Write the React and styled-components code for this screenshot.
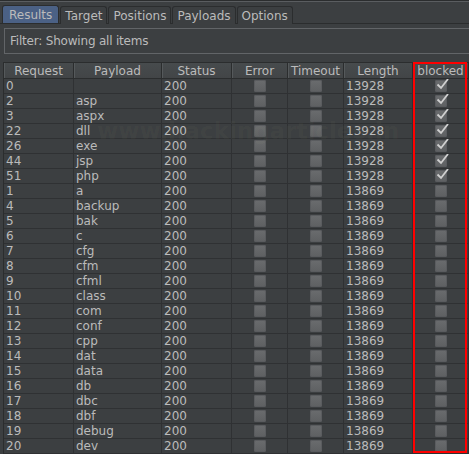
import React from "react";
import styled, { createGlobalStyle } from "styled-components";

const GlobalStyle = createGlobalStyle`
  html, body { margin: 0; padding: 0; background: #3c3f41; }
  body { font-family: "DejaVu Sans", "Liberation Sans", sans-serif; }
`;

const Page = styled.div`
  position: relative;
  width: 469px;
  height: 454px;
  overflow: hidden;
  background: #3c3f41;
  color: #bbbbbb;
  font-size: 11px;
  border-top: 1px solid #2b2d2e;
  box-sizing: border-box;
`;

const TopEdge = styled.div`
  height: 1px;
  background: #5a5d60;
`;

const TabBar = styled.div`
  display: flex;
  gap: 1px;
  margin-top: 3px;
  padding-left: 2px;
  height: 18px;
  border-bottom: 1px solid #2b2d2e;
`;

const Tab = styled.div`
  display: flex;
  align-items: center;
  height: 18px;
  padding: 0 ${(p) => (p.$active ? 6 : 4)}px;
  box-sizing: border-box;
  border: 1px solid #2b2d2e;
  border-bottom: none;
  border-radius: 3px 3px 0 0;
  background: ${(p) => (p.$active ? "#4b6185" : "#3c3f41")};
  color: #bbbbbb;
  font-size: 12px;
  margin-top: ${(p) => (p.$active ? 0 : 1)}px;
`;

const FilterBar = styled.div`
  display: flex;
  align-items: center;
  margin: 4px 0 0 4px;
  height: 26px;
  box-sizing: border-box;
  border: 1px solid #626568;
  border-right: none;
  padding-left: 5px;
  font-size: 12px;
  letter-spacing: -0.2px;
  color: #bbbbbb;
`;

const Table = styled.div`
  margin: 8px 0 0 3px;
  border-top: 1px solid #2b2d2e;
  border-left: 1px solid #2b2d2e;
`;

const cols = "70px 88px 70px 56px 56px 69px 1fr";

const HeaderRow = styled.div`
  display: grid;
  grid-template-columns: ${cols};
  height: 16px;
  background: linear-gradient(#474b4d, #424547);
  border-bottom: 1px solid #2b2d2e;
  box-sizing: border-box;
`;

const HeaderCell = styled.div`
  display: flex;
  align-items: center;
  justify-content: center;
  font-size: 12px;
  color: #bbbbbb;
  border-right: 1px solid #2b2d2e;
  box-shadow: inset 1px 0 0 #55595b;
  white-space: nowrap;
  overflow: hidden;
`;

const Row = styled.div`
  display: grid;
  grid-template-columns: ${cols};
  height: 15px;
  border-bottom: 1px solid #2f3133;
  box-sizing: border-box;
`;

const Cell = styled.div`
  display: flex;
  align-items: center;
  justify-content: ${(p) => (p.$center ? "center" : "flex-start")};
  padding-left: ${(p) => (p.$center ? 0 : 2)}px;
  border-right: 1px solid #2f3133;
  font-size: 12px;
  color: #bbbbbb;
  white-space: nowrap;
  overflow: hidden;
  position: relative;
`;

const Box = styled.div`
  position: relative;
  width: 12px;
  height: 12px;
  border-radius: 2px;
  background: linear-gradient(#6a6c6e, #5e6062);
  box-shadow: inset 0 0 0 1px #5a5c5f;
`;

const Check = styled.svg`
  position: absolute;
  left: 1px;
  top: -2px;
  width: 13px;
  height: 13px;
  overflow: visible;
`;

const RedFrame = styled.div`
  position: absolute;
  left: 413px;
  top: 61px;
  width: 54px;
  height: 391px;
  border: 2px solid #ff0000;
  box-sizing: border-box;
  pointer-events: none;
`;

const Watermark = styled.div`
  position: absolute;
  left: 97px;
  top: 117px;
  font-family: "DejaVu Sans", sans-serif;
  font-weight: bold;
  font-size: 23px;
  color: rgba(210, 210, 160, 0.045);
  pointer-events: none;
  white-space: nowrap;
`;

const rows = [
  ["0", "", "13928", true],
  ["2", "asp", "13928", true],
  ["3", "aspx", "13928", true],
  ["22", "dll", "13928", true],
  ["26", "exe", "13928", true],
  ["44", "jsp", "13928", true],
  ["51", "php", "13928", true],
  ["1", "a", "13869", false],
  ["4", "backup", "13869", false],
  ["5", "bak", "13869", false],
  ["6", "c", "13869", false],
  ["7", "cfg", "13869", false],
  ["8", "cfm", "13869", false],
  ["9", "cfml", "13869", false],
  ["10", "class", "13869", false],
  ["11", "com", "13869", false],
  ["12", "conf", "13869", false],
  ["13", "cpp", "13869", false],
  ["14", "dat", "13869", false],
  ["15", "data", "13869", false],
  ["16", "db", "13869", false],
  ["17", "dbc", "13869", false],
  ["18", "dbf", "13869", false],
  ["19", "debug", "13869", false],
  ["20", "dev", "13869", false],
];

function CheckBox({ checked }) {
  return (
    <Box>
      {checked && (
        <Check viewBox="0 0 13 13">
          <path
            d="M1.5 6.5 L5 10 L12 1"
            fill="none"
            stroke="#d0d0d0"
            strokeWidth="1.8"
            strokeLinejoin="miter"
          />
        </Check>
      )}
    </Box>
  );
}

const tabs = ["Results", "Target", "Positions", "Payloads", "Options"];
const headers = ["Request", "Payload", "Status", "Error", "Timeout", "Length", "blocked"];

export default function App() {
  return (
    <>
      <GlobalStyle />
      <Page>
        <TopEdge />
        <TabBar>
          {tabs.map((t, i) => (
            <Tab key={t} $active={i === 0}>
              {t}
            </Tab>
          ))}
        </TabBar>
        <FilterBar>Filter: Showing all items</FilterBar>
        <Table>
          <HeaderRow>
            {headers.map((h) => (
              <HeaderCell key={h}>{h}</HeaderCell>
            ))}
          </HeaderRow>
          {rows.map(([req, payload, len, blocked]) => (
            <Row key={req}>
              <Cell>{req}</Cell>
              <Cell>{payload}</Cell>
              <Cell>200</Cell>
              <Cell $center>
                <CheckBox />
              </Cell>
              <Cell $center>
                <CheckBox />
              </Cell>
              <Cell>{len}</Cell>
              <Cell $center>
                <CheckBox checked={blocked} />
              </Cell>
            </Row>
          ))}
        </Table>
        <Watermark>www.hackingarticles.in</Watermark>
        <RedFrame />
      </Page>
    </>
  );
}
